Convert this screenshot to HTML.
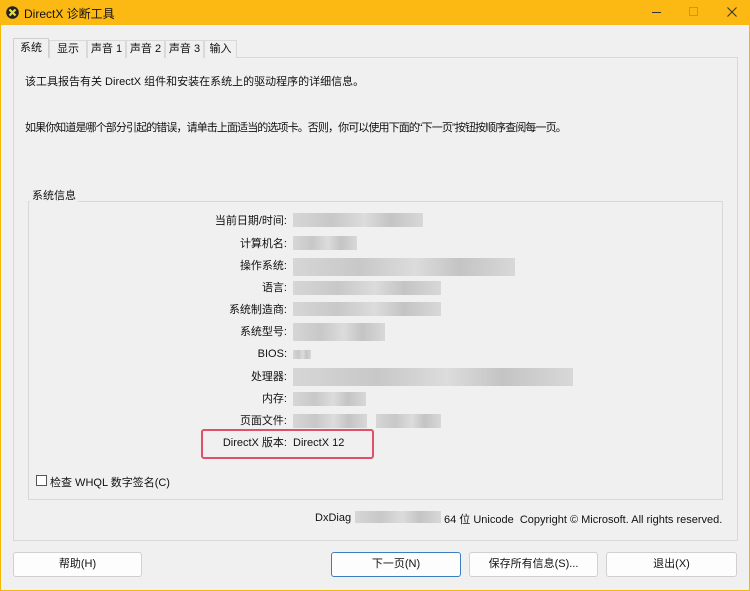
<!DOCTYPE html>
<html><head><meta charset="utf-8"><style>
*{margin:0;padding:0;box-sizing:border-box}
body{width:750px;height:591px;overflow:hidden;background:#f0f0f0;font-family:"Liberation Sans","Noto Sans CJK SC",sans-serif;font-size:11px;color:#111;position:relative}
.a{position:absolute}
.win{left:0;top:0;width:750px;height:591px;border:1px solid #f5b800;border-top:none}
.title{left:0;top:0;width:750px;height:25px;background:#fdb913}
.tab{top:40px;height:18px;line-height:17px;border:1px solid #d9d9d9;border-bottom:none;background:#f0f0f0;text-align:center;font-size:11px}
.panel{left:13px;top:57px;width:725px;height:484px;border:1px solid #d9d9d9;background:#f0f0f0}
.grp{left:28px;top:201px;width:695px;height:299px;border:1px solid #d8d8d8}
.lbl{width:100px;left:187px;text-align:right;height:16px;line-height:16px}
.v{height:14px;background:linear-gradient(90deg,#d6d6d6,#c8c8c8 30%,#dcdcdc 55%,#c4c4c4 75%,#d8d8d8)}
.btn{top:552px;height:25px;border:1px solid #d0d0d0;border-radius:3px;background:#fdfdfd;text-align:center;line-height:23px}
</style></head><body>
<div class="a win"></div>
<div class="a title"></div>
<svg class="a" style="left:6px;top:6px" width="13" height="13" viewBox="0 0 13 13"><circle cx="6.5" cy="6.5" r="6.3" fill="#222"/><path d="M3.5 3.5L9.5 9.5M9.5 3.5L3.5 9.5" stroke="#e8e030" stroke-width="2.2"/></svg>
<div class="a" style="left:24px;top:5px;font-size:12px">DirectX 诊断工具</div>
<div class="a" style="left:652px;top:12px;width:9px;height:1px;background:#333"></div>
<div class="a" style="left:689px;top:7px;width:9px;height:9px;border:1px solid #d49a00"></div>
<svg class="a" style="left:727px;top:7px" width="10" height="10" viewBox="0 0 10 10"><path d="M0.5 0.5L9.5 9.5M9.5 0.5L0.5 9.5" stroke="#333" stroke-width="1"/></svg>
<div class="a panel"></div>
<div class="a tab" style="left:13px;top:38px;height:20px;width:36px;background:#f0f0f0;border-color:#d0d0d0;z-index:2;line-height:19px">系统</div>
<div class="a tab" style="left:49px;width:38px">显示</div>
<div class="a tab" style="left:87px;width:39px">声音 1</div>
<div class="a tab" style="left:126px;width:39px">声音 2</div>
<div class="a tab" style="left:165px;width:39px">声音 3</div>
<div class="a tab" style="left:204px;width:33px">输入</div>
<div class="a" style="left:25px;top:73px">该工具报告有关 DirectX 组件和安装在系统上的驱动程序的详细信息。</div>
<div class="a" style="left:25px;top:119px;letter-spacing:-0.9px">如果你知道是哪个部分引起的错误，请单击上面适当的选项卡。否则，你可以使用下面的“下一页”按钮按顺序查阅每一页。</div>
<div class="a grp"></div>
<div class="a" style="left:30px;top:187px;padding:0 2px;background:#f0f0f0">系统信息</div>
<div class="a lbl" style="top:213px">当前日期/时间:</div><div class="a v" style="left:293px;top:213px;width:130px"></div>
<div class="a lbl" style="top:236px">计算机名:</div><div class="a v" style="left:293px;top:236px;width:64px"></div>
<div class="a lbl" style="top:258px">操作系统:</div><div class="a v" style="left:293px;top:258px;width:222px;height:18px"></div>
<div class="a lbl" style="top:280px">语言:</div><div class="a v" style="left:293px;top:281px;width:148px"></div>
<div class="a lbl" style="top:302px">系统制造商:</div><div class="a v" style="left:293px;top:302px;width:148px"></div>
<div class="a lbl" style="top:324px">系统型号:</div><div class="a v" style="left:293px;top:323px;width:92px;height:18px"></div>
<div class="a lbl" style="top:346px">BIOS:</div><div class="a v" style="left:293px;top:350px;width:18px;height:9px"></div>
<div class="a lbl" style="top:369px">处理器:</div><div class="a v" style="left:293px;top:368px;width:280px;height:18px"></div>
<div class="a lbl" style="top:391px">内存:</div><div class="a v" style="left:293px;top:392px;width:73px"></div>
<div class="a lbl" style="top:413px">页面文件:</div><div class="a v" style="left:293px;top:414px;width:74px"></div><div class="a v" style="left:376px;top:414px;width:65px"></div>
<div class="a" style="left:201px;top:429px;width:173px;height:30px;border:2px solid #e0506a;border-radius:3px"></div>
<div class="a lbl" style="top:435px">DirectX 版本:</div><div class="a" style="left:293px;top:435px;line-height:16px">DirectX 12</div>
<div class="a" style="left:36px;top:475px;width:11px;height:11px;border:1px solid #555;background:#fff"></div>
<div class="a" style="left:50px;top:474px">检查 WHQL 数字签名(C)</div>
<div class="a" style="left:315px;top:512px">DxDiag</div>
<div class="a v" style="left:355px;top:511px;width:86px;height:12px"></div>
<div class="a" style="left:444px;top:511px">64 位 Unicode&nbsp; Copyright © Microsoft. All rights reserved.</div>
<div class="a btn" style="left:13px;width:129px">帮助(H)</div>
<div class="a btn" style="left:331px;width:130px;border-color:#3c7fc1">下一页(N)</div>
<div class="a btn" style="left:469px;width:129px">保存所有信息(S)...</div>
<div class="a btn" style="left:606px;width:131px">退出(X)</div>
</body></html>
